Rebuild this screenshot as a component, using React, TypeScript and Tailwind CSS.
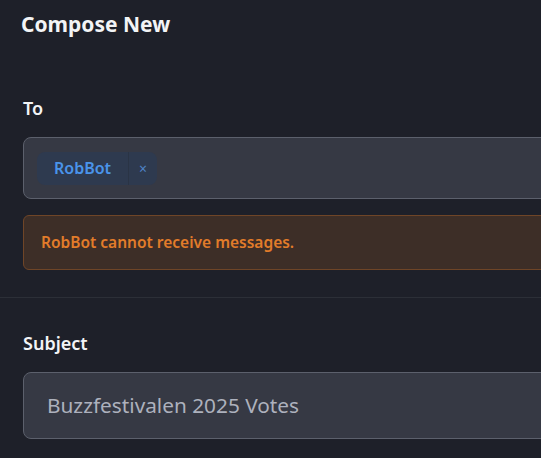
export default function App() {
  return (
    <div className="w-[541px] h-[458px] overflow-hidden bg-[#1e2029] text-white" style={{ fontFamily: '"Noto Sans", "Open Sans", sans-serif' }}>
      <div className="w-[600px]">
        <div className="pl-[21px] pt-[9px] h-[57px]">
          <h1 className="text-[21px] leading-[30px] font-bold text-[#f3f4f6]">Compose New</h1>
        </div>
        <div className="pl-[23px] pt-[39px] pb-[27px] border-b border-[#2c2f37]">
          <div className="text-[18px] leading-[24px] font-semibold text-[#f3f4f6] mb-[17px]">To</div>
          <div className="h-[62px] w-[577px] rounded-[8px] border border-[#5c606c] bg-[#363944] flex items-center pl-[13px]">
            <div className="flex h-[33px] items-center rounded-[8px] bg-[#2e3a4f]">
              <span className="px-[17px] text-[16px] font-semibold text-[#4a94ea]">RobBot</span>
              <span className="h-full w-px bg-[#2a3445]" />
              <span className="w-[28px] text-center text-[14px] text-[#4f83c8]">×</span>
            </div>
          </div>
          <div className="mt-[16px] h-[55px] w-[577px] rounded-[6px] border border-[#6f4527] bg-[#3d2e27] flex items-center pl-[17px]">
            <span className="text-[15.5px] font-semibold text-[#e27c2a]">RobBot cannot receive messages.</span>
          </div>
        </div>
        <div className="pl-[23px] pt-[33px]">
          <div className="text-[18px] leading-[24px] font-semibold text-[#f3f4f6] mb-[17px]">Subject</div>
          <div className="h-[67px] w-[577px] rounded-[8px] border border-[#5c606c] bg-[#363944] flex items-center pl-[23px]">
            <span className="text-[20.8px] text-[#adb1bd]">Buzzfestivalen 2025 Votes</span>
          </div>
        </div>
      </div>
    </div>
  );
}
